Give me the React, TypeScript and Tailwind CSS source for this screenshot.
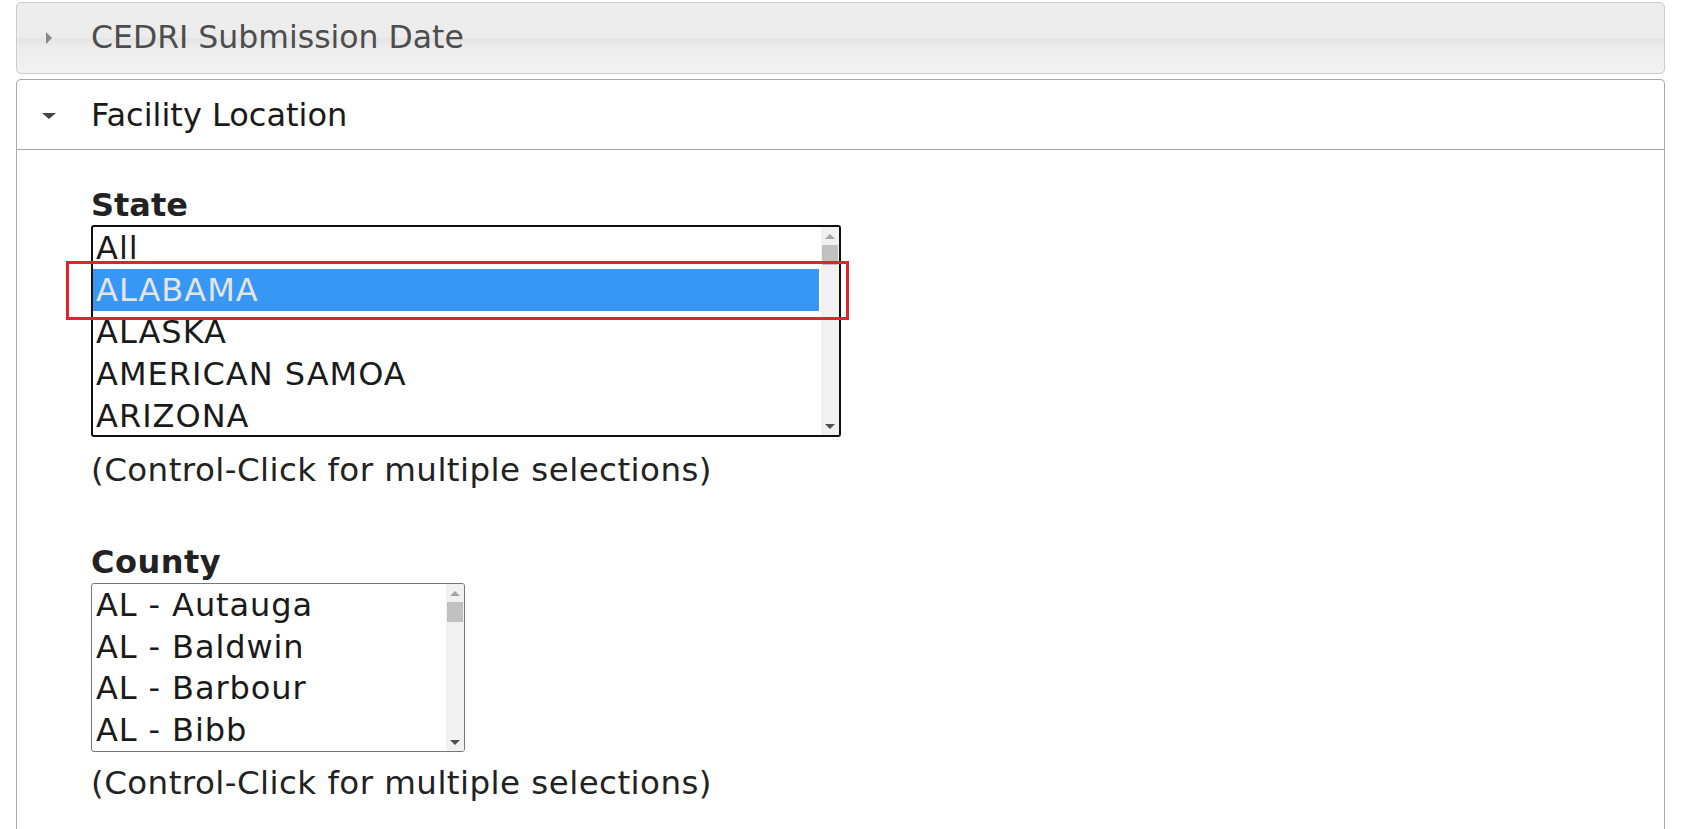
import React from "react";

const font = { fontFamily: '"DejaVu Sans", Verdana, sans-serif' };

function Scrollbar({ height }: { height: number }) {
  return (
    <div className="flex w-[18px] shrink-0 flex-col items-center bg-[#f1f1f1]" style={{ height }}>
      <div className="flex h-[18px] w-full items-center justify-center">
        <div className="h-0 w-0 border-x-[5px] border-b-[5px] border-x-transparent border-b-[#a3a3a3]" />
      </div>
      <div className="h-[20px] w-[16px] bg-[#c1c1c1]" />
      <div className="flex-1" />
      <div className="flex h-[18px] w-full items-center justify-center">
        <div className="h-0 w-0 border-x-[5px] border-t-[5px] border-x-transparent border-t-[#505050]" />
      </div>
    </div>
  );
}

function StateList() {
  const items = ["All", "ALABAMA", "ALASKA", "AMERICAN SAMOA", "ARIZONA"];
  return (
    <div className="relative w-[750px]">
      <div className="flex h-[212px] w-[750px] overflow-hidden rounded-[3px] border-2 border-[#111] bg-white">
        <div className="mr-[2px] flex flex-1 flex-col">
          {items.map((t, i) => (
            <div
              key={t}
              className={
                "flex h-[42px] shrink-0 items-center pl-[3px] text-[32px] leading-none tracking-[1px] " +
                (i === 1 ? "bg-[#3797f5] text-[#e4e4e4]" : "text-[#1a1a1a]")
              }
            >
              {t}
            </div>
          ))}
        </div>
        <Scrollbar height={208} />
      </div>
      <div className="pointer-events-none absolute left-[-25px] top-[36px] h-[59px] w-[783px] border-[3px] border-[#e8202a]" />
    </div>
  );
}

function CountyList() {
  const items = ["AL - Autauga", "AL - Baldwin", "AL - Barbour", "AL - Bibb"];
  return (
    <div className="flex h-[169px] w-[374px] overflow-hidden rounded-[3px] border border-[#767676] bg-white">
      <div className="mr-[2px] flex flex-1 flex-col">
        {items.map((t) => (
          <div key={t} className="flex h-[41.75px] shrink-0 items-center pl-[4px] text-[32px] leading-none tracking-[0.9px] text-[#1a1a1a]">
            {t}
          </div>
        ))}
      </div>
      <Scrollbar height={167} />
    </div>
  );
}

export default function App() {
  return (
    <div className="h-[829px] w-[1681px] overflow-hidden bg-white px-[16px] pt-[2px]" style={font}>
      <div className="flex h-[72px] items-center rounded-[5px] border border-[#cccccc] bg-[linear-gradient(to_bottom,#ededed_0%,#ececec_48%,#e4e4e4_52%,#ececec_62%,#f2f2f2_100%)]">
        <div className="flex w-[64px] justify-center">
          <div className="h-0 w-0 border-y-[6px] border-l-[6px] border-y-transparent border-l-[#888]" />
        </div>
        <span className="pl-[10px] text-[31.5px] text-[#4d4d4d]">CEDRI Submission Date</span>
      </div>
      <div className="mt-[5px] h-[760px] rounded-t-[5px] border-x border-t border-[#aaaaaa]">
        <div className="flex h-[70px] items-center border-b border-[#aaaaaa]">
          <div className="flex w-[64px] justify-center pt-[2px]">
            <div className="h-0 w-0 border-x-[7px] border-t-[6px] border-x-transparent border-t-[#454545]" />
          </div>
          <span className="pl-[10px] text-[32px] text-[#1a1a1a]">Facility Location</span>
        </div>
        <div className="pl-[74px]">
          <div className="mt-[36px] mb-[1px] text-[32px] font-bold leading-[38px] text-[#222]">State</div>
          <StateList />
          <div className="mt-[14px] text-[32.5px] leading-[38px] tracking-[0.45px] text-[#222]">(Control-Click for multiple selections)</div>
          <div className="mt-[54px] mb-[2px] text-[32px] font-bold leading-[38px] tracking-[0.5px] text-[#222]">County</div>
          <CountyList />
          <div className="mt-[12px] text-[32.5px] leading-[38px] tracking-[0.45px] text-[#222]">(Control-Click for multiple selections)</div>
        </div>
      </div>
    </div>
  );
}
